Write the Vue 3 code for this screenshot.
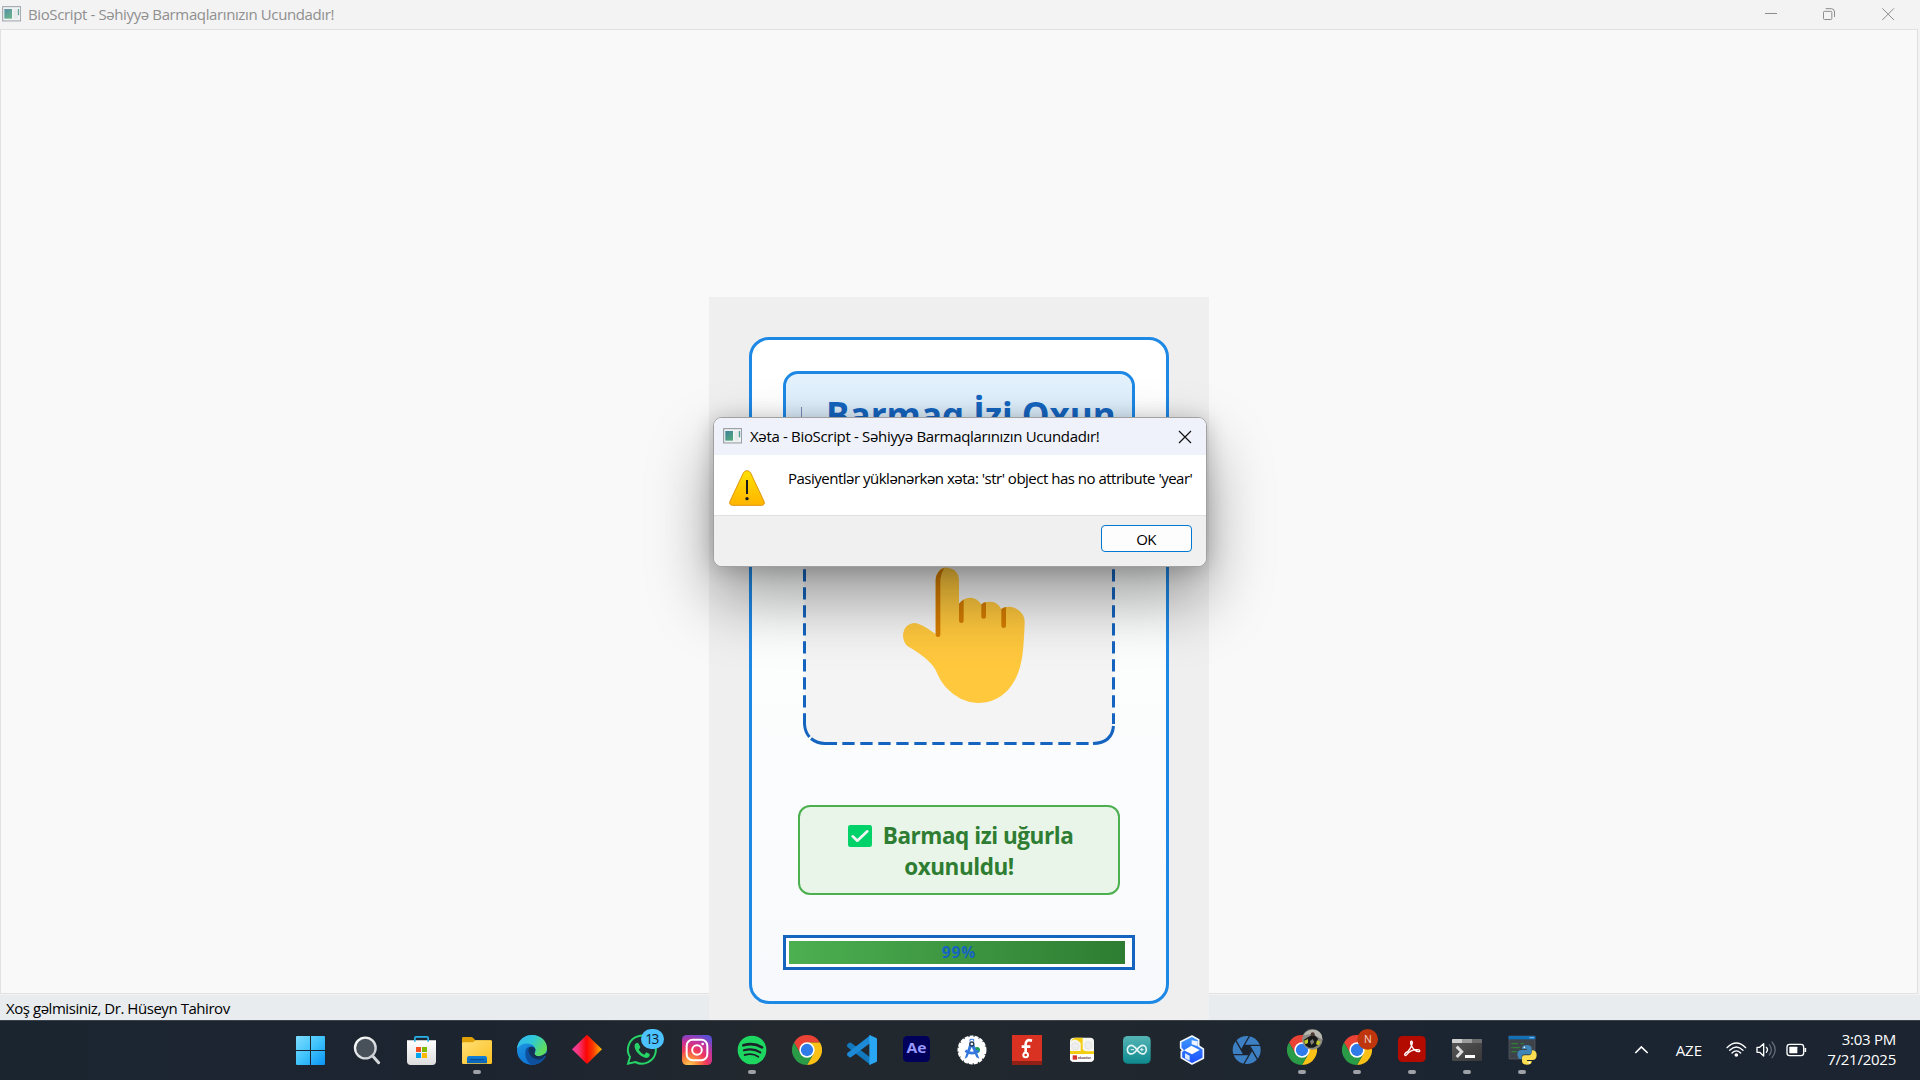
<script setup>
const progress = 99
const running = [3, 8, 18, 19, 20, 21, 22]
// left edge of each taskbar slot in its icon's own drawing units
const slots = [12, 177, 342, 507, 672, 837, 42, 207, 372, 537, 702, 867, 42, 207, 372, 537, 702, 867, 72, 237, 402, 567, 732]
const apps = ['start', 'search', 'store', 'files', 'edge', 'diamond', 'whatsapp', 'instagram', 'spotify', 'chrome', 'vscode', 'ae', 'studio', 'fritzing', 'lego', 'arduino', 'cubes', 'shutter', 'chrome-a', 'chrome-n', 'acrobat', 'terminal', 'python']
  .map((id, i) => ({ id, x: slots[i], on: running.includes(i) }))
</script>

<template>
  <div class="desktop">
    <svg class="defs" width="0" height="0">
      <defs>
        <linearGradient id="gWin" x1="0" y1="0" x2="1" y2="1"><stop offset="0" stop-color="#7fdcff" /><stop offset=".5" stop-color="#3fc3fb" /><stop offset="1" stop-color="#0a93f5" /></linearGradient>
        <linearGradient id="gLens" x1="0" y1="0" x2="1" y2="1"><stop offset="0" stop-color="#fff" /><stop offset="1" stop-color="#c4c8cc" /></linearGradient>
        <linearGradient id="gStore" x1="0" y1="0" x2="0" y2="1"><stop offset="0" stop-color="#fff" /><stop offset="1" stop-color="#dcdcdc" /></linearGradient>
        <linearGradient id="gFolder" x1="0" y1="0" x2="1" y2="1"><stop offset="0" stop-color="#ffe076" /><stop offset="1" stop-color="#fcc021" /></linearGradient>
        <linearGradient id="gDrawer" x1="0" y1="0" x2="0" y2="1"><stop offset="0" stop-color="#1281d8" /><stop offset="1" stop-color="#0a62b5" /></linearGradient>
        <linearGradient id="gEdgeA" x1="0" y1="0" x2="1" y2=".5"><stop offset="0" stop-color="#35b4f2" /><stop offset=".5" stop-color="#2fc8d8" /><stop offset="1" stop-color="#5fdc5c" /></linearGradient>
        <linearGradient id="gEdgeB" x1="0" y1="0" x2=".6" y2="1"><stop offset="0" stop-color="#1f9de6" /><stop offset="1" stop-color="#0b6fd0" /></linearGradient>
        <linearGradient id="gDia" x1="0" y1="0" x2="1" y2="0"><stop offset="0" stop-color="#f93aa6" /><stop offset=".2" stop-color="#f5387e" /><stop offset=".48" stop-color="#fb0606" /><stop offset=".7" stop-color="#fb3a00" /><stop offset="1" stop-color="#fdb800" /></linearGradient>
        <radialGradient id="gInsta" cx=".25" cy="1.05" r="1.15"><stop offset="0" stop-color="#ffd45c" /><stop offset=".25" stop-color="#fb8a3a" /><stop offset=".5" stop-color="#f0385c" /><stop offset=".75" stop-color="#c132a0" /><stop offset="1" stop-color="#5b50d6" /></radialGradient>
        <linearGradient id="gArd" x1="0" y1="0" x2="0" y2="1"><stop offset="0" stop-color="#55b4b5" /><stop offset="1" stop-color="#0d8a8f" /></linearGradient>
        <linearGradient id="gCube" x1="0" y1="0" x2="0" y2="1"><stop offset="0" stop-color="#3f9bff" /><stop offset="1" stop-color="#1b4dff" /></linearGradient>
        <linearGradient id="gTerm" x1="0" y1="0" x2="1" y2="1"><stop offset="0" stop-color="#585858" /><stop offset="1" stop-color="#383838" /></linearGradient>
        <linearGradient id="gWarn" x1="0" y1="0" x2="0" y2="1"><stop offset="0" stop-color="#ffe100" /><stop offset="1" stop-color="#ffb400" /></linearGradient>
        <linearGradient id="gThumb" x1="0" y1="0" x2=".6" y2="1"><stop offset="0" stop-color="#3f7f9c" /><stop offset="1" stop-color="#4fa67c" /></linearGradient>
        <symbol id="chrome" viewBox="0 0 90 90">
          <path d="M6 22.500A45 45 0 0 1 84 22.500H45L25.500 56.250Z" fill="#ea4335" />
          <path d="M84 22.500A45 45 0 0 1 45 90L64.500 56.250L45 22.500Z" fill="#fbc116" />
          <path d="M6 22.500A45 45 0 0 0 45 90L64.500 56.250H25.500Z" fill="#2a9c48" />
          <circle cx="45" cy="45" r="23" fill="#fff" /><circle cx="45" cy="45" r="18.500" fill="#2f7bea" />
        </symbol>
        <symbol id="appicon" viewBox="0 0 57 49">
          <rect x="2" y="2" width="54" height="43" fill="#f1f3f4" stroke="#8b9298" stroke-width="3" />
          <path d="M1 47H57" stroke="#c8ccd0" stroke-width="3" />
          <rect x="7" y="9" width="23" height="29" fill="url(#gThumb)" />
          <rect x="35" y="10" width="12" height="28" fill="#e6e9ea" />
          <path d="M49.500 9V28" stroke="#4a9a90" stroke-width="4" />
        </symbol>
      </defs>
    </svg>

    <header class="titlebar">
      <svg class="tb-icon" width="19" height="16.300"><use href="#appicon" width="19" height="16.300" /></svg>
      <span class="tb-text">BioScript - Səhiyyə Barmaqlarınızın Ucundadır!</span>
      <svg class="winbtns" width="200" height="29" viewBox="0 0 600 87" fill="none" stroke="#8c8c8c" stroke-width="3">
        <path d="M135 40.500H171" />
        <rect x="310.500" y="34" width="25" height="24.500" rx="3" />
        <path d="M317 26H334Q343.500 26 343.500 36V51" />
        <path d="M487 25L522 60M522 25L487 60" />
      </svg>
    </header>

    <main class="workspace"></main>
    <footer class="statusbar"><span>Xoş gəlmisiniz, Dr. Hüseyn Tahirov</span></footer>

    <section class="panel">
      <div class="card">
        <div class="heading"><i></i><span>Barmaq İzi Oxun</span></div>
        <svg class="scan" width="312" height="299" viewBox="0 13 312 299">
          <rect x="1.500" y="14.500" width="309" height="296" rx="20" fill="#f4f4f4" />
          <g fill="none" stroke="#1565c0" stroke-width="3">
            <path d="M1.500 28.300V291" stroke-dasharray="12.300 5.700" />
            <path d="M310.500 28.300V291" stroke-dasharray="12.300 5.700" />
            <path d="M39.300 310.500H288" stroke-dasharray="12.300 5.700" />
            <path d="M1.500 291Q2 299 6.500 304M8 305.500Q14 310.500 22 310.500H34M290 310.500Q309 310 310.500 293" />
          </g>
          <g transform="translate(-103 127) scale(.33333)">
            <path d="M707 222V59Q708 40 722 27Q731 22 743 23Q775 26 777 59V132Q789 113 811 113Q833 114 844 134Q853 124 872 125Q893 126 904 147Q913 139 931 140Q951 142 965 160Q974 170 974 188Q972 245 968 280Q960 350 924 390Q887 429 832 429Q779 426 739 383Q724 367 712 341Q699 302 622 258Q609 246 609 226Q612 190 646 189Q664 191 707 222Z" fill="#ffc83d" />
            <path d="M707 224V59Q709 32 733 24Q723 38 721 58V224Q721 231 714 231Q707 231 707 224ZM777 182V131Q783 123 791 119V182Q791 189 784 189Q777 189 777 182ZM844 170V133Q850 127 858 127V170Q858 176 851 176Q844 176 844 170ZM904 197V147Q910 142 918 141V197Q918 204 911 204Q904 204 904 197Z" fill="#d67d00" />
          </g>
        </svg>
        <div class="result">
          <p><svg width="24" height="22" viewBox="0 0 72 66"><rect width="72" height="66" rx="7" fill="#00d26a" /><path d="M14 34L28 47L58 19" fill="none" stroke="#f4f4f4" stroke-width="8" stroke-linecap="round" stroke-linejoin="round" /></svg><span>Barmaq izi uğurla</span></p>
          <p><span>oxunuldu!</span></p>
        </div>
        <div class="progress"><div class="chunk"></div><b>{{ progress }}%</b></div>
      </div>
    </section>

    <section class="dialog">
      <div class="dlg-title">
        <svg width="19" height="16.300"><use href="#appicon" width="19" height="16.300" /></svg>
        <span>Xəta - BioScript - Səhiyyə Barmaqlarınızın Ucundadır!</span>
        <svg class="dlg-x" width="14" height="14" viewBox="0 0 14 14"><path d="M1 1L13 13M13 1L1 13" stroke="#111" stroke-width="1.200" /></svg>
      </div>
      <div class="dlg-body">
        <svg width="36" height="36" viewBox="0 0 108 108">
          <path d="M54 2Q61 2 65 9L105 94Q109 105 98 106H10Q-1 105 3 94L43 9Q47 2 54 2Z" fill="url(#gWarn)" stroke="#e0960a" stroke-width="3" />
          <path d="M54 30V72" stroke="#1a1a1a" stroke-width="6" /><circle cx="54" cy="86" r="5" fill="#1a1a1a" />
        </svg>
        <span>Pasiyentlər yüklənərkən xəta: 'str' object has no attribute 'year'</span>
      </div>
      <div class="dlg-foot"><button>OK</button></div>
    </section>

    <nav class="taskbar">
      <div class="apps">
        <div v-for="app in apps" :key="app.id" class="app">
          <svg width="55" height="60" :viewBox="`${app.x} 15 165 180`">
            <g v-if="app.id === 'start'" fill="url(#gWin)">
              <path d="M48 66Q48 63 51 63H90V105H48ZM93 63H132Q135 63 135 66V105H93ZM48 108H90V150H51Q48 150 48 147ZM93 108H135V147Q135 150 132 150H93Z" />
            </g>
            <g v-else-if="app.id === 'search'">
              <path d="M280 125L296 143" stroke="#d5d8db" stroke-width="9" stroke-linecap="round" />
              <circle cx="256" cy="99" r="31" fill="#485059" stroke="url(#gLens)" stroke-width="7" />
            </g>
            <g v-else-if="app.id === 'store'">
              <path d="M381 76H468V139Q468 150 457 150H392Q381 150 381 139Z" fill="url(#gStore)" />
              <path d="M404.500 80V69Q404.500 65.500 408 65.500H441Q444.500 65.500 444.500 69V80" fill="none" stroke="#28b4ea" stroke-width="5" />
              <rect x="408" y="96" width="15" height="15" fill="#f25022" /><rect x="426" y="96" width="15" height="15" fill="#7fba00" />
              <rect x="408" y="114" width="15" height="15" fill="#00a4ef" /><rect x="426" y="114" width="15" height="15" fill="#ffb900" />
            </g>
            <g v-else-if="app.id === 'files'">
              <path d="M546 70Q546 66 550 66H574Q578 66 582 71L586 76H632Q636 77 636 81V90H546Z" fill="#e0a008" />
              <path d="M546 85Q546 82 550 82H578L587 76H632Q636 76 636 80V143Q636 147 632 147H550Q546 147 546 143Z" fill="url(#gFolder)" />
              <path d="M561 145V129Q561 123 567 123H615Q621 123 621 129V145Z" fill="url(#gDrawer)" />
              <path d="M572 134H610" stroke="#07498f" stroke-width="3" stroke-linecap="round" />
            </g>
            <g v-else-if="app.id === 'edge'">
              <circle cx="756" cy="105" r="45" fill="url(#gEdgeB)" />
              <path d="M711 101C713 76 732 60 756 60C784 60 801 80 801 99C801 116 788 123 774 123C765 123 761 119 764 114C768 106 767 94 756 89C740 81 722 86 711 101Z" fill="url(#gEdgeA)" />
              <path d="M738 103C742 96 749 94 757 95C768 97 768 108 763 115C761 120 766 124 776 124C786 124 792 121 797 121C791 138 774 150 756 150C741 143 732 123 738 103Z" fill="#0e4f9e" />
              <path d="M745 104Q747 95 756 95Q766 97 766 105Q762 115 764 120Q771 126 785 124Q800 118 804 108V125L795 122Q785 137 769 133Q748 127 745 104Z" fill="#12325c" />
              <path d="M763 115C757 128 778 127 788 121L806 110V130L797 121Q788 125 776 124Q761 123 763 115Z" fill="#1c2531" />
            </g>
            <path v-else-if="app.id === 'diamond'" d="M921 59L966 103L921 147L876 103Z" fill="url(#gDia)" />
            <g v-else-if="app.id === 'whatsapp'">
              <path d="M84 146L90 126A42 42 0 1 1 106 141Z" fill="#202830" stroke="#26d366" stroke-width="6" />
              <path d="M104 89Q110 80 116 86L121 96Q121 99 116 104Q122 114 133 119L139 112L149 117Q151 126 139 129Q127 128 114 115Q102 102 104 89Z" fill="#26d366" />
              <rect x="123" y="42" width="69" height="60" rx="30" fill="#4cc2ff" />
              <text x="157" y="87" text-anchor="middle" font-size="41" fill="#10202c" textLength="42">13</text>
            </g>
            <g v-else-if="app.id === 'instagram'" fill="none" stroke="#fff" stroke-width="6">
              <rect x="246" y="60" width="90" height="90" rx="14" fill="url(#gInsta)" stroke="none" />
              <rect x="260" y="74" width="62" height="62" rx="18" /><circle cx="291" cy="105" r="14.500" /><circle cx="308" cy="87" r="4" fill="#fff" stroke="none" />
            </g>
            <g v-else-if="app.id === 'spotify'" fill="none" stroke="#1c2229" stroke-linecap="round">
              <circle cx="456" cy="105" r="43" fill="#1ed760" stroke="none" />
              <path d="M430 91Q460 81 486 97" stroke-width="8" /><path d="M432 106Q459 98 481 112" stroke-width="6.500" /><path d="M434 120Q457 113 475 125" stroke-width="5.500" />
            </g>
            <use v-else-if="app.id === 'chrome'" href="#chrome" x="576" y="60" width="90" height="90" />
            <g v-else-if="app.id === 'vscode'">
              <path d="M742 88L748 83Q751 82 754 84L812 128V150L742 96Q740 92 742 88Z" fill="#1279bf" />
              <path d="M742 121L748 127Q751 128 754 126L812 83V60L742 114Q740 118 742 121Z" fill="#1c8ad6" />
              <path d="M808 60L829 69Q831 70 831 73V137Q831 140 829 141L808 150Z" fill="#2aa7f2" />
            </g>
            <g v-else-if="app.id === 'ae'">
              <rect x="909" y="63" width="81" height="78" rx="13" fill="#00005b" />
              <text x="949.500" y="115" text-anchor="middle" font-size="44" font-weight="700" fill="#9999ff" textLength="60" lengthAdjust="spacingAndGlyphs">Ae</text>
            </g>
            <g v-else-if="app.id === 'studio'">
              <circle cx="126" cy="105" r="40" fill="#fff" stroke="#fff" stroke-width="7" stroke-dasharray="12 3" />
              <circle cx="141" cy="105" r="9" fill="#1a9b50" />
              <path d="M104 131L119 84H131L148 131L139 127L125 96L112 127Z" fill="#3478dd" /><path d="M106 107Q126 122 146 107" fill="none" stroke="#3478dd" stroke-width="8" />
              <path d="M120 80V73H131V80" fill="none" stroke="#3478dd" stroke-width="3" /><circle cx="125.500" cy="87" r="6" fill="#e8edf4" stroke="#263c56" stroke-width="4" />
            </g>
            <g v-else-if="app.id === 'fritzing'">
              <path d="M246 60H336V150H246Z" fill="#d93122" /><path d="M246 138H336V150H246Z" fill="#8f2016" />
              <path d="M306 77Q287 71 287 88V114M275 95H301" fill="none" stroke="#fff" stroke-width="8" /><circle cx="287" cy="120" r="7" fill="#d93122" stroke="#fff" stroke-width="6" />
            </g>
            <g v-else-if="app.id === 'lego'">
              <rect x="420" y="68" width="72" height="72" rx="11" fill="#f5f5f1" />
              <path d="M424 78Q428 68 438 68H458V102Q462 110 473 109H492V117H420V108H452V84Q437 66 424 78Z" fill="#f5cd10" />
              <circle cx="436" cy="94" r="11" fill="#eee" stroke="#ddd" stroke-width="2" /><circle cx="475" cy="91" r="11" fill="#eee" stroke="#ddd" stroke-width="2" />
              <path d="M420 117H492V129Q492 140 481 140H431Q420 140 420 129Z" fill="#fff" /><rect x="428" y="121" width="13" height="13" fill="#d5382a" />
              <text x="443" y="132" font-size="11" font-weight="700" fill="#653a3a" textLength="40" lengthAdjust="spacingAndGlyphs">education</text>
            </g>
            <g v-else-if="app.id === 'arduino'">
              <rect x="579" y="63" width="83" height="83" rx="14" fill="url(#gArd)" />
              <path d="M621 104Q609 88 599 92Q592 96 592 104Q592 112 599 116Q609 120 621 104Q633 88 643 92Q649 96 649 104Q649 112 643 116Q633 120 621 104Z" fill="none" stroke="#e6f5f5" stroke-width="5" />
              <path d="M602 104H612M630 104H641M635.500 99V109" stroke="#e6f5f5" stroke-width="3" />
            </g>
            <g v-else-if="app.id === 'cubes'" stroke-linejoin="round">
              <path d="M786 63L806 74V93L820 102V130L786 147L754 128V110L759 106L752 99V80Z" fill="url(#gCube)" stroke="#f2f6ff" stroke-width="5" />
              <path d="M785 76L803 79V94L785 88Z" fill="#eef5ff" /><path d="M762 106L784 92L809 105L786 118Z" fill="#fff" /><path d="M765 115L779 122V137L765 130Z" fill="#dbe9ff" />
            </g>
            <g v-else-if="app.id === 'shutter'">
              <circle cx="950" cy="105" r="42" fill="#3d7fc3" />
              <path d="M966 105L958 119H942L934 105L942 91H958Z" fill="#1c2430" />
              <path d="M942 91H994M958 91L984 136M966 105L940 150M958 119H906M942 119L916 74M934 105L960 60" fill="none" stroke="#1c2430" stroke-width="4" />
            </g>
            <g v-else-if="app.id === 'chrome-a'">
              <use href="#chrome" x="111" y="60" width="90" height="90" />
              <circle cx="187" cy="73" r="31" fill="#8b8a84" /><path d="M160 61Q174 40 200 46Q218 55 216 73L198 62L181 58Z" fill="#b9b8b0" />
              <path d="M166 91L161 75L175 66L190 58L203 70L205 90L190 98H176Z" fill="#18191a" /><path d="M162 77L174 72V84L166 88ZM201 76L212 80L206 91L198 88Z" fill="#c5ca26" /><circle cx="188" cy="58" r="6" fill="#4b3830" /><path d="M180 79L188 72L193 82L184 90Z" fill="#807f78" />
            </g>
            <g v-else-if="app.id === 'chrome-n'">
              <use href="#chrome" x="276" y="60" width="90" height="90" /><circle cx="353" cy="73" r="31" fill="#bf360c" />
              <text x="353.500" y="84" text-anchor="middle" font-size="31" fill="#f3d5cb">N</text>
            </g>
            <g v-else-if="app.id === 'acrobat'">
              <rect x="444" y="63" width="83" height="78" rx="13" fill="#b30b00" />
              <path d="M465 121Q461 116 473 110Q486 96 487 82Q485 76 482 80Q481 91 490 101Q502 113 509 109Q511 103 498 104Q480 106 471 118Q467 123 465 121Z" fill="none" stroke="#fff" stroke-width="4" />
            </g>
            <g v-else-if="app.id === 'terminal'">
              <rect x="606" y="72" width="90" height="66" rx="4" fill="url(#gTerm)" /><path d="M606 84V75Q606 72 609 72H636V84Z" fill="#d0d0d0" /><path d="M636 72H666V84H636Z" fill="#9c9c9c" /><path d="M666 72H693Q696 72 696 75V84H666Z" fill="#6d6d6d" />
              <path d="M620 95L635 110L620 126" fill="none" stroke="#dcdcdc" stroke-width="9" /><path d="M645 124.500H675" stroke="#fff" stroke-width="9" />
            </g>
            <g v-else-if="app.id === 'python'">
              <path d="M777 63H855V132H777Z" fill="#3d4348" stroke="#596066" stroke-width="2" /><path d="M776 63H856V73H776Z" fill="#1270b8" /><path d="M838 68H852" stroke="#71b3e6" stroke-width="4" />
              <path d="M784 86H804M784 98H811M784 110H800M812 86H821" stroke="#2f7f3a" stroke-width="3.500" />
              <path d="M830 90Q845 90 845 101V111Q845 118 838 118H823Q815 118 815 128V133Q802 133 802 118Q802 105 815 105H831V102H816V99Q817 90 830 90Z" fill="#3f85b8" />
              <path d="M831 149Q816 149 816 138V128Q816 121 823 121H838Q846 120 846 106Q860 106 860 120Q860 135 847 135H831V138H845V141Q844 149 831 149Z" fill="#ffdd50" /><circle cx="823" cy="97" r="2.500" fill="#fff" /><circle cx="838" cy="143" r="2.500" fill="#fff" />
            </g>
          </svg>
          <i v-if="app.on"></i>
        </div>
      </div>
      <div class="tray">
        <svg width="200" height="60" viewBox="80 15 600 180" fill="none" stroke="#fff" stroke-width="4">
          <path d="M105 114L123 96L142 114" stroke-width="5" />
          <text x="226" y="122" font-size="42" fill="#fff" stroke="none" textLength="79" lengthAdjust="spacingAndGlyphs">AZE</text>
          <path d="M380 98Q408 70 436 98M388 106Q408 86 428 106M395 114Q408 101 421 114" stroke-linecap="round" /><circle cx="408" cy="120" r="5.500" fill="#fff" stroke="none" />
          <path d="M470 97H478L490 86V123L478 112H470Z" stroke-linejoin="round" /><path d="M498 97Q505 104 498 112" stroke-linecap="round" />
          <path d="M507 89Q519 104 507 120M515 81Q534 104 515 128" stroke="#626a74" stroke-linecap="round" />
          <rect x="560" y="88" width="50" height="34" rx="8" /><rect x="567" y="95" width="24" height="20" rx="2" fill="#fff" stroke="none" /><path d="M615 99V111" stroke-width="5" />
        </svg>
        <div class="clock"><span>3:03 PM</span><span>7/21/2025</span></div>
      </div>
    </nav>
  </div>
</template>

<style>
body { overflow: hidden; }
</style>

<style scoped>
.desktop { position: relative; display: flex; flex-direction: column; width: 1920px; height: 1080px; overflow: hidden; background: #f3f3f3; font-family: "Open Sans", "Noto Sans", sans-serif; font-size: 15px; color: #000; }
.defs { position: absolute; }
svg { display: block; flex: none; }
text { font-family: "Open Sans", "Noto Sans", sans-serif; }
span { white-space: nowrap; }

.titlebar { display: flex; align-items: center; height: 29px; background: #f3f3f3; color: #8f8f8f; }
.tb-icon { margin-left: 2px; opacity: .85; }
.tb-text { margin: 0 0 2px 7px; letter-spacing: -.38px; }
.winbtns { margin-left: auto; }
.workspace { box-sizing: border-box; height: 965px; width: 1918px; background: #f9f9f9; border: 1px solid #e1e1e1; border-bottom: 1px solid #dfe1e2; }
.statusbar { display: flex; align-items: center; box-sizing: border-box; height: 25px; margin-top: 1px; padding-left: 6px; background: #e8ecef; letter-spacing: -.45px; }

.panel { position: absolute; left: 709px; top: 297px; box-sizing: border-box; width: 500px; height: 723px; padding: 40px; background: #efefef; }
.card { box-sizing: border-box; display: flex; flex-direction: column; align-items: center; height: 667px; padding-top: 31px; border: 3px solid #1e88e5; border-radius: 20px; background: linear-gradient(#fff, #fdfffe 40%, #f8f9fc); }
.heading { position: relative; box-sizing: border-box; width: 352px; height: 75px; padding: 18px 17px 0 40px; border: 3px solid #1e88e5; border-radius: 15px; background: linear-gradient(#e3f2fd, #d8ebf9); color: #1565c0; font-weight: 700; font-size: 35px; line-height: 46px; }
.heading i { position: absolute; left: 15px; top: 33px; width: 1px; height: 20px; background: #7d86b5; }
.scan { flex: none; }
.result { box-sizing: border-box; width: 322px; height: 90px; margin-top: 60px; padding-top: 13px; border: 2px solid #4caf50; border-radius: 12px; background: #e8f5e8; color: #2e7d32; font-weight: 700; font-size: 22.5px; letter-spacing: -.45px; }
.result p { display: flex; justify-content: center; align-items: center; gap: 11px; margin: 0; height: 31px; line-height: 31px; }
.result p:first-child { padding-left: 3px; }
.progress { position: relative; box-sizing: border-box; width: 352px; height: 35px; margin-top: 40px; padding: 3px; border: 3px solid #1565c0; background: #fff; }
.chunk { width: 336px; height: 23px; background: linear-gradient(90deg, #4caf50, #2e7d32); }
.progress b { position: absolute; inset: 0; text-align: center; line-height: 29px; color: #1565c0; font-size: 15.5px; letter-spacing: .9px; }

.dialog { position: absolute; left: 713px; top: 417px; box-sizing: border-box; width: 494px; height: 150px; border: 1px solid #a0a0a0; border-radius: 9px; overflow: hidden; background: #fff; box-shadow: 0 32px 64px rgba(0, 0, 0, .38), 0 2px 21px rgba(0, 0, 0, .2); }
.dlg-title { display: flex; align-items: center; height: 37px; padding: 0 14px 0 9px; background: #eff2fa; letter-spacing: -.33px; }
.dlg-title span { margin: 0 0 2px 8px; }
.dlg-x { margin-left: auto; }
.dlg-body { display: flex; height: 60px; box-sizing: border-box; padding: 15px 0 0 15px; }
.dlg-body span { margin: -1px 0 0 23px; line-height: 19px; letter-spacing: -.5px; }
.dlg-foot { display: flex; justify-content: flex-end; height: 51px; padding: 9px 14px; box-sizing: border-box; border-top: 1px solid #dfdfdf; background: #f0f0f0; }
.dlg-foot button { width: 91px; height: 27px; padding: 0 1px 0 0; border: 1px solid #0078d4; border-radius: 4px; background: #fdfdfd; font: inherit; letter-spacing: -.6px; color: #000; }

.taskbar { position: relative; display: flex; justify-content: space-between; box-sizing: border-box; height: 60px; background: linear-gradient(90deg, #1b2530, #1c2430 25%, #22282e 40%, #20272e 58%, #1b2431 75%, #1b2430); box-shadow: inset 0 1px #3c434b; }
.apps { display: flex; margin-left: 284px; }
.app { position: relative; width: 55px; height: 60px; }
.app i { position: absolute; left: 24px; top: 50px; width: 8px; height: 4px; border-radius: 2px; background: #9ea1a5; }
.tray { display: flex; width: 293px; color: #fff; }
.clock { display: flex; flex-direction: column; align-items: flex-end; width: 69px; padding-top: 9px; line-height: 20px; letter-spacing: -.25px; }
</style>
